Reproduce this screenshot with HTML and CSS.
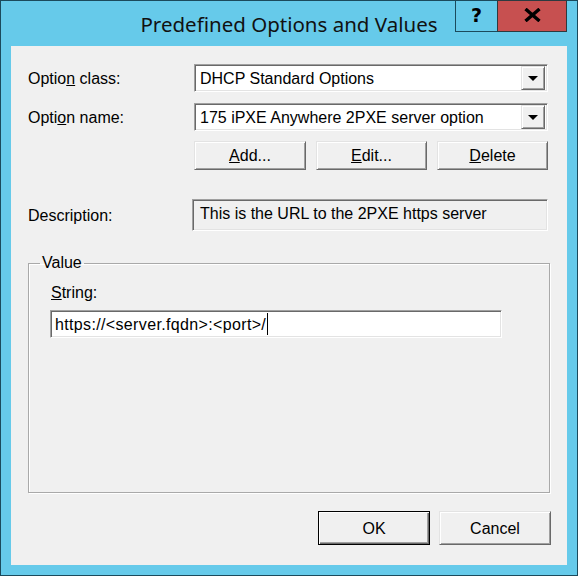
FILE: index.html
```html
<!DOCTYPE html>
<html>
<head>
<meta charset="utf-8">
<link rel="stylesheet" href="styles.css">
</head>
<body>
<div class="window">
  <div class="titlebar">
    <div class="spacer"></div>
    <div class="title">Predefined Options and Values</div>
    <div class="caption-buttons">
      <div class="cap-btn help">?</div>
      <div class="cap-btn close">
        <svg width="17" height="14" viewBox="0 0 17 14"><path d="M1.5 1 L15.5 13 M15.5 1 L1.5 13" stroke="#000" stroke-width="3.4" fill="none"/></svg>
      </div>
    </div>
  </div>
  <div class="client">
    <div class="row row-first">
      <div class="label">Optio<u>n</u> class:</div>
      <div class="combo"><span class="combo-text">DHCP Standard Options</span><span class="drop"><span class="tri"></span></span></div>
    </div>
    <div class="row row-second">
      <div class="label">Opti<u>o</u>n name:</div>
      <div class="combo"><span class="combo-text">175 iPXE Anywhere 2PXE server option</span><span class="drop"><span class="tri"></span></span></div>
    </div>
    <div class="row row-buttons">
      <div class="label"></div>
      <div class="btn-group">
        <div class="btn"><u>A</u>dd...</div>
        <div class="btn"><u>E</u>dit...</div>
        <div class="btn"><u>D</u>elete</div>
      </div>
    </div>
    <div class="row row-desc">
      <div class="label">Description:</div>
      <div class="desc">This is the URL to the 2PXE https server</div>
    </div>
    <fieldset class="group">
      <legend>Value</legend>
      <div class="str-label"><u>S</u>tring:</div>
      <div class="edit"><span class="edit-text">https://&lt;server.fqdn&gt;:&lt;port&gt;/</span><span class="caret"></span></div>
    </fieldset>
    <div class="footer">
      <div class="btn btn-default">OK</div>
      <div class="btn btn-footer">Cancel</div>
    </div>
  </div>
</div>
</body>
</html>
```
FILE: styles.css
```css
html, body {
  margin: 0;
  padding: 0;
  width: 578px;
  height: 576px;
  overflow: hidden;
}
.window {
  box-sizing: border-box;
  width: 578px;
  height: 576px;
  border: 1px solid #1b4a5c;
  background: #66caea;
  display: flex;
  flex-direction: column;
  padding: 0 10px 10px 10px;
}
.titlebar {
  display: grid;
  grid-template-columns: 112px 1fr 112px;
  height: 45px;
  margin: 0 -10px 0 -10px;
  padding: 0 10px;
}
.title {
  font-family: "Noto Sans", "Open Sans", sans-serif;
  font-size: 20.5px;
  color: #111;
  text-align: center;
  line-height: 47px;
  white-space: nowrap;
}
.caption-buttons {
  display: flex;
  align-items: flex-start;
  margin-top: -1px;
}
.cap-btn {
  box-sizing: border-box;
  height: 32px;
  display: flex;
  align-items: center;
  justify-content: center;
}
.help {
  width: 42px;
  border-left: 1px solid #1b4a5c;
  border-bottom: 1px solid #1b4a5c;
  border-top: 1px solid #1b4a5c;
  font-family: "DejaVu Sans", sans-serif;
  font-weight: bold;
  font-size: 19px;
  color: #000;
  padding-bottom: 2px;
}
.close {
  width: 70px;
  background: #c75050;
  border: 1px solid #2c3a40;
  padding-bottom: 2px;
}
.client {
  flex: 1;
  background: #f0f0f0;
  display: flex;
  flex-direction: column;
  padding: 18px 17px 19px 17px;
  font-family: "Liberation Sans", Arial, sans-serif;
  font-size: 16px;
  color: #000;
}
.row {
  display: grid;
  grid-template-columns: 166px 354px;
  align-items: center;
}
.row-second { margin-top: 11px; }
.row-buttons { margin-top: 10px; }
.row-desc { margin-top: 29px; }
.label {
  white-space: nowrap;
  line-height: 22px;
  padding-top: 2px;
}
.combo {
  box-sizing: border-box;
  height: 28px;
  background: #fff;
  border: 1px solid;
  border-color: #a0a0a0 #ffffff #ffffff #a0a0a0;
  box-shadow: inset 1px 1px #696969, inset -1px -1px #e3e3e3;
  display: flex;
  align-items: center;
  padding: 2px 2px 1px 5px;
}
.combo-text {
  flex: 1;
  white-space: nowrap;
  overflow: hidden;
  line-height: 22px;
  padding-top: 1px;
}
.drop {
  box-sizing: border-box;
  width: 24px;
  height: 24px;
  margin-top: -1px;
  background: #f0f0f0;
  border: 1px solid;
  border-color: #e3e3e3 #696969 #696969 #e3e3e3;
  box-shadow: inset 1px 1px #fff, inset -1px -1px #a0a0a0;
  display: flex;
  align-items: center;
  justify-content: center;
}
.tri {
  width: 0;
  height: 0;
  border-left: 5px solid transparent;
  border-right: 5px solid transparent;
  border-top: 5px solid #000;
  margin-top: 1px;
}
.btn-group {
  display: grid;
  grid-template-columns: 112px 111px 111px;
  column-gap: 10px;
}
.btn {
  box-sizing: border-box;
  height: 29px;
  background: #f0f0f0;
  border: 1px solid;
  border-color: #e3e3e3 #696969 #696969 #e3e3e3;
  box-shadow: inset 1px 1px #fff, inset -1px -1px #a0a0a0;
  display: flex;
  align-items: center;
  justify-content: center;
  white-space: nowrap;
  line-height: 22px;
  padding-top: 1px;
}
.desc {
  box-sizing: border-box;
  height: 32px;
  width: 356px;
  margin-left: -2px;
  background: #f0f0f0;
  border: 1px solid;
  border-color: #a0a0a0 #ffffff #ffffff #a0a0a0;
  box-shadow: inset 1px 1px #696969, inset -1px -1px #e3e3e3;
  padding: 3px 0 0 7px;
  line-height: 22px;
  white-space: nowrap;
}
.group {
  box-sizing: border-box;
  margin: 23px 0 0 0;
  padding: 0 0 0 21px;
  height: 239px;
  border: 1px solid #a9a9a9;
  box-shadow: inset 1px 1px #fff, 1px 1px #fff;
  min-width: 0;
}
.group legend {
  padding: 0 2px;
  line-height: 18px;
  margin-left: -10px;
}
.str-label {
  margin-top: 12px;
  margin-left: 1px;
  line-height: 18px;
}
.edit {
  box-sizing: border-box;
  margin-top: 8px;
  width: 452px;
  height: 28px;
  background: #fff;
  border: 1px solid;
  border-color: #a0a0a0 #ffffff #ffffff #a0a0a0;
  box-shadow: inset 1px 1px #696969, inset -1px -1px #e3e3e3;
  padding: 2px 0 0 4px;
  line-height: 22px;
  white-space: nowrap;
  display: flex;
  align-items: flex-start;
}
.edit-text {
  letter-spacing: 0.35px;
  padding-top: 1px;
}
.caret {
  display: inline-block;
  width: 1px;
  height: 22px;
  background: #000;
  margin-left: 1px;
}
.footer {
  margin-top: 18px;
  display: flex;
  justify-content: flex-end;
  gap: 9px;
  margin-right: -1px;
}
.footer .btn {
  width: 112px;
  height: 34px;
}
.btn-default.btn {
  border: 1px solid #000;
  box-shadow: inset 1px 1px #fff, inset -1px -1px #696969, inset -2px -2px #a0a0a0;
}
```
